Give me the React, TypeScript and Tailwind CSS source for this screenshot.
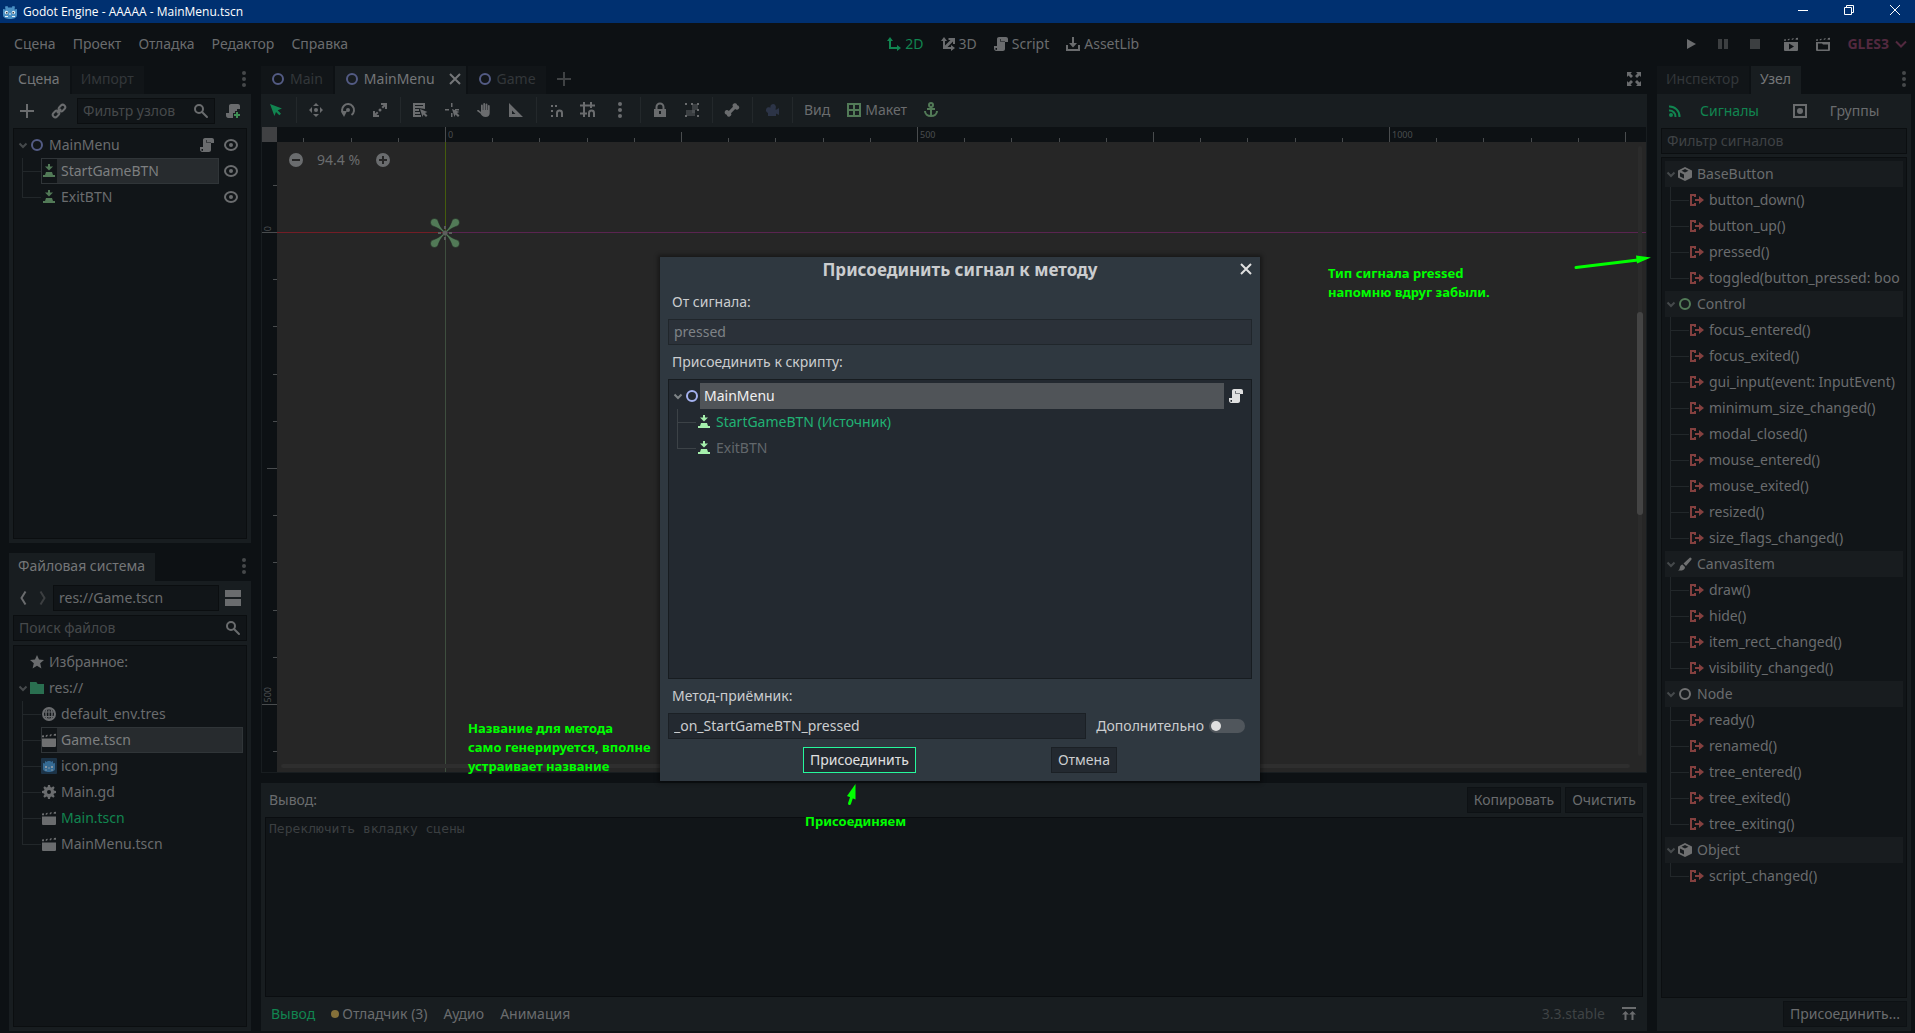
import { ReactNode, useState } from "react";
import clsx from "clsx";

interface IconProps {
  name: string;
  className?: string;
}

interface SignalGroup {
  title: string;
  icon: string;
  iconClass: string;
  signals: string[];
}

// 16x16 editor icons, drawn with currentColor
const ICONS: Record<string, ReactNode> = {
  ring: <circle cx="8" cy="8" r="5" fill="none" stroke="currentColor" strokeWidth="2" />,
  button: <path d="M7 1h2v2.500h3L8 7.500 4 3.500h3zM5 9h6l1 3h2v2H2v-2h2z" />,
  script: (
    <path d="M6 1C4.900 1 4 1.900 4 3v7H1v2.500C1 13.900 2 15 3.200 15H10c1.100 0 2-.9 2-2V6h3V3.200C15 1.900 14.100 1 13 1zm1 2h.6v2H12v.6H7zM2.500 12H4v1.200c0 .4-.3.800-.8.800s-.7-.4-.7-.8z" fillRule="evenodd" />
  ),
  scriptAdd: (
    <>
      <path d="M6 1C4.900 1 4 1.900 4 3v7H1v2.500C1 13.900 2 15 3.200 15H8v-5h2V8h2V6h3V3.200C15 1.900 14.100 1 13 1z" />
      <path className="text-[#3f8f55]" d="M11 9h2v2h2v2h-2v2h-2v-2H9v-2h2z" />
    </>
  ),
  eye: (
    <>
      <ellipse cx="8" cy="8" rx="6" ry="5" fill="none" stroke="currentColor" strokeWidth="2" />
      <circle cx="8" cy="8" r="2" />
    </>
  ),
  plus: <path d="M7 1h2v6h6v2H9v6H7V9H1V7h6z" />,
  link: (
    <g fill="none" stroke="currentColor" strokeWidth="2">
      <rect x="-3.500" y="-2.500" width="7" height="5" rx="2.500" transform="translate(11 5) rotate(-45)" />
      <rect x="-3.500" y="-2.500" width="7" height="5" rx="2.500" transform="translate(5 11) rotate(-45)" />
      <path d="M6 10l4-4" />
    </g>
  ),
  search: (
    <g fill="none" stroke="currentColor" strokeWidth="2">
      <circle cx="6" cy="6" r="4" />
      <path d="M9 9l5 5" strokeLinecap="round" />
    </g>
  ),
  arrowDown: <path d="M4.500 6.500L8 10l3.500-3.500" fill="none" stroke="currentColor" strokeWidth="2" />,
  chevron: <path d="M3 5.500l5 5 5-5" fill="none" stroke="currentColor" strokeWidth="2" />,
  back: <path d="M10.500 1.500L6.500 8l4 6.500" fill="none" stroke="currentColor" strokeWidth="2" />,
  forward: <path d="M5.500 1.500l4 6.500-4 6.500" fill="none" stroke="currentColor" strokeWidth="2" />,
  split: <path d="M0 0h16v7H0zM0 9h16v7H0z" />,
  star: <path d="M8 1l2 4.600 5 .4-3.800 3.300L12.400 14.500 8 11.800 3.600 14.500l1.200-5.200L1 6l5-.4z" />,
  folder: <path d="M1 2h6c1 0 1 2 2 2h6v10H1z" />,
  globe: (
    <g fill="none" stroke="currentColor">
      <circle cx="8" cy="8" r="6" strokeWidth="2" />
      <ellipse cx="8" cy="8" rx="3" ry="6" strokeWidth="1.500" />
      <path d="M2 6h12M2 10.500h12M8 2v12" strokeWidth="1.200" />
    </g>
  ),
  scene: <path d="M1 6.500h14V14a1 1 0 0 1-1 1H2a1 1 0 0 1-1-1zM1 3.500l2-.3v2H1zM5 3l2-.3-1 2H4.500zM9 2.500l2-.3-1 2H8.500zM13 2l2-.3v2h-2.500z" />,
  playScene: (
    <path fillRule="evenodd" d="M1 6h14v8a1 1 0 0 1-1 1H2a1 1 0 0 1-1-1zM6 7.500v6l5-3zM1 3.500l2-.3v1.500H1zM5 3l2-.3-1 1.500H4.500zM9 2.500l2-.3-1 1.500H8.500zM13 2l2-.3v2h-2.500z" />
  ),
  playCustom: (
    <path fillRule="evenodd" d="M1 6h14v8a1 1 0 0 1-1 1H2a1 1 0 0 1-1-1zM3 7.500v6h10v-5H8l-1-1zM1 3.500l2-.3v1.500H1zM5 3l2-.3-1 1.500H4.500zM9 2.500l2-.3-1 1.500H8.500zM13 2l2-.3v2h-2.500z" />
  ),
  gear: (
    <path fillRule="evenodd" d="M7 1h2l.4 2 1.200.5 1.700-1.200 1.400 1.400-1.200 1.700.5 1.200 2 .4v2l-2 .4-.5 1.200 1.200 1.700-1.400 1.400-1.700-1.200-1.200.5L9 15H7l-.4-2-1.200-.5-1.700 1.200-1.400-1.400 1.200-1.700L3 9.400 1 9V7l2-.4.5-1.200-1.200-1.700 1.400-1.400 1.700 1.200L6.600 3zM8 6a2 2 0 1 0 0 4 2 2 0 0 0 0-4z" />
  ),
  robot: (
    <>
      <rect width="16" height="16" rx="1" fill="#1c3347" />
      <path fill="#356a93" d="M2 5l2 .5V3l2 1 .5-1h3l.5 1 2-1v2.500L14 5v6c0 2-3 3-6 3s-6-1-6-3z" />
      <path fill="#8796a2" d="M4 8h2v2H4zM10 8h2v2h-2zM7.500 9h1v2h-1zM4 11.500h2v1H4zM10 11.500h2v1h-2z" />
    </>
  ),
  select: <path d="M2 2l12 4.500-4.300 1.800 3.300 3.400-1.700 1.600L8 10l-1.600 4z" />,
  move: (
    <>
      <path d="M8 1l3 3H5zM8 15l3-3H5zM1 8l3-3v6zM15 8l-3-3v6z" />
      <circle cx="8" cy="8" r="2" />
    </>
  ),
  rotate: (
    <>
      <path d="M4 12.500A6 6 0 1 1 11.500 13" fill="none" stroke="currentColor" strokeWidth="2" />
      <circle cx="8" cy="8" r="2" />
      <path d="M1 9h6l-3 6z" />
    </>
  ),
  scale: (
    <>
      <path d="M9 1h6v6h-2V4.500l-2 2L9.500 5l2-2H9zM1 9h2v2.500l2-2L6.500 11l-2 2H7v2H1z" />
      <circle cx="8" cy="8" r="1.500" />
    </>
  ),
  listSelect: (
    <>
      <path fillRule="evenodd" d="M1 1h12v6L6.500 6H3v1h4v2H3v1h5v2H3v1h6v2H1zM3 3v1h8V3z" />
      <path d="M8 7l7.500 3-2.500 1 2.500 2.500-1.500 1.500L11.500 12.500l-1 2.500z" />
    </>
  ),
  pivot: (
    <path d="M7 1h1.500v4H7zM1 7h4v1.500H1zM11 7h4v1.500h-4zM7 11h1.500v4H7zM8 7l7.500 3-2.500 1 2.500 2.500-1.500 1.500-2.500-2.500-1 2.500z" />
  ),
  hand: (
    <path d="M5 3.500a.9.900 0 0 1 1.800 0V8h.5V2a.9.900 0 0 1 1.800 0v6h.5V2.500a.9.900 0 0 1 1.800 0V8h.5V4a.9.900 0 0 1 1.800 0v7c0 2.500-1.500 4-4 4-2.800 0-4-1.500-5.200-3.500L1 9c0-1 1.500-1.300 2.200-.5L5 10z" />
  ),
  ruler: <path fillRule="evenodd" d="M1 1l14 14H1zM4 8.500V12h3.500z" />,
  snap: (
    <>
      <path d="M3 3h2v2H3zM7 3h2v2H7zM3 8h2v2H3zM3 13h2v2H3z" />
      <path d="M9 15v-4a2.500 2.500 0 0 1 5 0v4" fill="none" stroke="currentColor" strokeWidth="2" />
    </>
  ),
  snapGrid: (
    <g fill="none" stroke="currentColor" strokeWidth="2">
      <path d="M4 0v15M11 0v6M0 3.500h15M0 11.500h7" />
      <path d="M9 15v-4a2.500 2.500 0 0 1 5 0v4" />
    </g>
  ),
  dots: (
    <>
      <circle cx="8" cy="2" r="2" />
      <circle cx="8" cy="8" r="2" />
      <circle cx="8" cy="14" r="2" />
    </>
  ),
  lock: (
    <>
      <path d="M4.500 8V5a3.500 3.500 0 0 1 7 0v3" fill="none" stroke="currentColor" strokeWidth="2" />
      <path fillRule="evenodd" d="M2 7h12v8H2zM7 9v3h2V9z" />
    </>
  ),
  group: (
    <>
      <path fill="#3b3f42" d="M8 2h6v6h-3v6H2V8h6z" />
      <path fill="#4b4f52" d="M8 8h3v3H8z" />
      <path d="M1 1h2v2H1zM7 1h2v2H7zM13 1h2v2h-2zM1 13h2v2H1zM13 13h2v2h-2zM13 7h2v2h-2z" />
    </>
  ),
  bone: (
    <path d="M10.500 1.200a2.300 2.300 0 0 1 2.700 2 2.300 2.300 0 1 1-2 3.800L7 11.200a2.300 2.300 0 1 1-4.300 1.500A2.300 2.300 0 1 1 4.800 9L9 4.800a2.300 2.300 0 0 1 1.500-3.600z" />
  ),
  camera: (
    <path d="M9 2a3 3 0 0 1 2.700 4.200V8L15 6v7l-3-1.500V14H4v-3a3 3 0 1 1 2.500-5.400A3 3 0 0 1 9 2z" />
  ),
  layout: <path fillRule="evenodd" d="M1 1h14v14H1zM3 3v4h4V3zM9 3v4h4V3zM3 9v4h4V9zM9 9v4h4V9z" />,
  anchor: (
    <g fill="none" stroke="currentColor" strokeWidth="2">
      <circle cx="8" cy="3" r="2" />
      <path d="M8 5v9M4 7h8M2 9c0 3 2.500 5 6 5s6-2 6-5" />
    </g>
  ),
  twoD: <path d="M4 1l3 4H5v6h6V9l4 3-4 3v-2H3V5H1z" />,
  threeD: <path d="M4 1l3 4H5v4.500l5.500-5.500H8.500V2H15v6h-2V5.500L7.500 11H11V9l4 3-4 3v-2H3V5H1z" />,
  assetLib: <path d="M7 1h2v6h3l-4 4.500L4 7h3zM1 9h2v4h10V9h2v6H1z" />,
  play: <path d="M4 3l9 5-9 5z" />,
  pause: <path d="M3 3h4v10H3zM9 3h4v10H9z" />,
  stop: <path d="M3 3h10v10H3z" />,
  expand: (
    <path d="M1 1h5L4.500 2.500 7 5 5 7 2.500 4.500 1 6zM15 1v5l-1.500-1.500L11 7 9 5l2.500-2.500L10 1zM1 15v-5l1.500 1.500L5 9l2 2-2.500 2.500L6 15zM15 15h-5l1.500-1.500L9 11l2-2 2.500 2.500L15 10z" />
  ),
  close: <path d="M3 3l10 10M13 3L3 13" fill="none" stroke="currentColor" strokeWidth="2" />,
  signals: (
    <g fill="none" stroke="currentColor" strokeWidth="2">
      <circle cx="4" cy="12" r="1" />
      <path d="M2 7.500A6 6 0 0 1 8.500 14M2 3.500A10 10 0 0 1 12.500 14" />
    </g>
  ),
  groups: (
    <>
      <path fillRule="evenodd" d="M1 1h14v14H1zM3 3v10h10V3z" />
      <circle cx="8" cy="8" r="3" />
    </>
  ),
  cube: (
    <path fillRule="evenodd" d="M8 1l7 3.500v7L8 15l-7-3.500v-7zM8 3L4.500 4.800 8 6.500l3.500-1.700zM3 6.500v4l4 2V8.500z" />
  ),
  brush: (
    <path d="M13 1.500a1.500 1.500 0 0 1 1.500 2L9 10 6.500 7.500zM5.500 8.500L8 11c0 3-3 4-7 3.500 2-1 1.500-2 2-3.500.4-1.500 1.500-2.500 2.500-2.500z" />
  ),
  signal: <path d="M1 2h6v3H5V4H3v8h2v-1h2v3H1zM6 7h4V4l5 4-5 4V9H6z" />,
  expandBottom: <path d="M1 1h14v2H1zM4.500 5L8 8.500H5.500V14h-2V8.500H1zM11.500 5L15 8.500h-2.500V14h-2V8.500H8z" />,
  zoomOut: <path fillRule="evenodd" d="M8 1a7 7 0 1 0 0 14A7 7 0 0 0 8 1zM4 7h8v2H4z" />,
  zoomIn: <path fillRule="evenodd" d="M8 1a7 7 0 1 0 0 14A7 7 0 0 0 8 1zM7 4h2v3h3v2H9v3H7V9H4V7h3z" />,
};

function Icon({ name, className }: IconProps) {
  return (
    <svg viewBox="0 0 16 16" fill="currentColor" aria-hidden="true" className={clsx("h-4 w-4 shrink-0", className)}>
      {ICONS[name]}
    </svg>
  );
}

const MENUS = ["Сцена", "Проект", "Отладка", "Редактор", "Справка"];

const FILES = [
  { name: "default_env.tres", icon: "globe" },
  { name: "Game.tscn", icon: "scene", selected: true },
  { name: "icon.png", icon: "robot" },
  { name: "Main.gd", icon: "gear" },
  { name: "Main.tscn", icon: "scene", main: true },
  { name: "MainMenu.tscn", icon: "scene" },
];

const SIGNAL_GROUPS: SignalGroup[] = [
  {
    title: "BaseButton",
    icon: "cube",
    iconClass: "text-[#6f7071]",
    signals: ["button_down()", "button_up()", "pressed()", "toggled(button_pressed: boo"],
  },
  {
    title: "Control",
    icon: "ring",
    iconClass: "text-[#527a57]",
    signals: [
      "focus_entered()",
      "focus_exited()",
      "gui_input(event: InputEvent)",
      "minimum_size_changed()",
      "modal_closed()",
      "mouse_entered()",
      "mouse_exited()",
      "resized()",
      "size_flags_changed()",
    ],
  },
  {
    title: "CanvasItem",
    icon: "brush",
    iconClass: "text-[#6f7071]",
    signals: ["draw()", "hide()", "item_rect_changed()", "visibility_changed()"],
  },
  {
    title: "Node",
    icon: "ring",
    iconClass: "text-[#6f7071]",
    signals: ["ready()", "renamed()", "tree_entered()", "tree_exited()", "tree_exiting()"],
  },
  { title: "Object", icon: "cube", iconClass: "text-[#6f7071]", signals: ["script_changed()"] },
];

const TOOL_GROUPS = [
  ["select"],
  ["move", "rotate", "scale"],
  ["listSelect", "pivot", "hand", "ruler"],
  ["snap", "snapGrid", "dots"],
  ["lock", "group"],
  ["bone"],
  ["camera"],
];

// canvas origin and zoom, in viewport pixels
const ORIGIN_X = 183;
const ORIGIN_Y = 105;
const ZOOM = 0.944;

function Guide({ last, light }: { last?: boolean; light?: boolean }) {
  const color = light ? "border-[#3c4247]" : "border-[#22272a]";
  return (
    <span className="ml-[5px] flex h-[26px] w-[19px] shrink-0 flex-col">
      <span className={clsx("h-[14px] border-b border-l", color)} />
      {!last && <span className={clsx("flex-1 border-l", color)} />}
    </span>
  );
}

function Arrow() {
  return (
    <span className="flex w-3 shrink-0 justify-center">
      <Icon name="arrowDown" className="text-[#45494b]" />
    </span>
  );
}

function DockTab({ label, active }: { label: string; active?: boolean }) {
  return (
    <button
      type="button"
      className={clsx("h-7 pr-[10px] pb-[2px] pl-[9px]", active ? "bg-[#181d20] text-[#747678]" : "bg-[#111518] text-[#33373a]")}
    >
      {label}
    </button>
  );
}

function DockMenu() {
  return (
    <button type="button" aria-label="Параметры дока" className="ml-auto flex w-[14px] items-center justify-center pb-[2px] text-[#45484a]">
      <Icon name="dots" />
    </button>
  );
}

function ToolButton({ name, label, className }: { name: string; label: string; className?: string }) {
  return (
    <button type="button" aria-label={label} className={clsx("flex h-[26px] w-7 shrink-0 items-center justify-center", className)}>
      <Icon name={name} />
    </button>
  );
}

function SelectedLabel({ icon, iconClass, label }: { icon: string; iconClass: string; label: string }) {
  return (
    <span className="flex h-[26px] flex-1 items-center outline-1 -outline-offset-1 outline-[#303538]">
      <Icon name={icon} className={iconClass} />
      <span className="flex h-full flex-1 items-center bg-[#272b2e] pl-1 text-[#7d7f80]">{label}</span>
    </span>
  );
}

function TitleBar() {
  return (
    <header className="flex h-[23px] shrink-0 items-center bg-[#003070] pl-[2px] text-xs text-white">
      <svg viewBox="0 0 16 16" className="mr-[5px] h-4 w-4" aria-hidden="true">
        <path fill="#4a90c4" d="M1 5l2.500.5-.5-3 2.500-.5.5 1.500h4L10.500 2l2.500.5-.5 3L15 5v6c0 3-4 4-7 4s-7-1-7-4z" />
        <circle cx="4.500" cy="8.500" r="1.700" fill="#e8f1f8" />
        <circle cx="11.500" cy="8.500" r="1.700" fill="#e8f1f8" />
        <path d="M4 8h1.500v1.500H4zM10.500 8H12v1.500h-1.500z" fill="#38424a" />
        <path d="M7.500 9h1v2h-1zM3 12h3v1H3zM10 12h3v1h-3z" fill="#e8f1f8" />
      </svg>
      <h1 className="flex-1 font-['Open_Sans']">Godot Engine - AAAAA - MainMenu.tscn</h1>
      <div className="flex items-center gap-9 pr-[15px] pb-[3px]">
        <button type="button" aria-label="Свернуть">
          <svg viewBox="0 0 10 10" className="h-[10px] w-[10px]"><path d="M0 5.500h10" stroke="#fff" /></svg>
        </button>
        <button type="button" aria-label="Восстановить">
          <svg viewBox="0 0 10 10" className="h-[10px] w-[10px]"><path d="M.5 2.500h7v7h-7zM2.500 2V.5h7v7H8" fill="none" stroke="#fff" /></svg>
        </button>
        <button type="button" aria-label="Закрыть">
          <svg viewBox="0 0 10 10" className="h-[10px] w-[10px]"><path d="M0 0l10 10M10 0L0 10" stroke="#fff" /></svg>
        </button>
      </div>
    </header>
  );
}

function MenuBar() {
  return (
    <nav className="flex h-[43px] shrink-0 items-center justify-between pr-[6px] pb-px pl-[14px] text-[#6a6c6e]">
      <div className="flex gap-[17px]">
        {MENUS.map((menu) => (
          <button key={menu} type="button">{menu}</button>
        ))}
      </div>
      <div className="flex gap-4">
        <button type="button" className="flex items-center gap-[3px] text-[#118550]"><Icon name="twoD" />2D</button>
        <button type="button" className="flex items-center gap-[3px]"><Icon name="threeD" />3D</button>
        <button type="button" className="flex items-center gap-[3px]"><Icon name="script" />Script</button>
        <button type="button" className="flex items-center gap-[3px]"><Icon name="assetLib" />AssetLib</button>
      </div>
      <div className="flex items-center gap-1">
        <ToolButton name="play" label="Запустить" />
        <ToolButton name="pause" label="Пауза" className="text-[#3c3f41]" />
        <ToolButton name="stop" label="Стоп" className="mr-1 text-[#3c3f41]" />
        <ToolButton name="playScene" label="Запустить сцену" />
        <ToolButton name="playCustom" label="Запустить другую сцену" />
        <button type="button" className="ml-[6px] flex items-center gap-1 font-bold text-[#52293f]">
          GLES3
          <Icon name="chevron" />
        </button>
      </div>
    </nav>
  );
}

function SceneDock() {
  return (
    <section className="flex min-h-0 flex-1 flex-col">
      <div className="flex gap-[2px]">
        <DockTab label="Сцена" active />
        <DockTab label="Импорт" />
        <DockMenu />
      </div>
      <div className="flex flex-1 flex-col gap-1 bg-[#181d20] p-1">
        <div className="flex items-center gap-1">
          <ToolButton name="plus" label="Добавить узел" />
          <ToolButton name="link" label="Добавить экземпляр" />
          <label className="flex h-[26px] min-w-0 flex-1 items-center border border-[#0b0e10] bg-[#111518] px-[5px]">
            <input type="text" aria-label="Фильтр узлов" placeholder="Фильтр узлов" className="min-w-0 flex-1 bg-transparent outline-none placeholder:text-[#46494b]" />
            <Icon name="search" />
          </label>
          <ToolButton name="scriptAdd" label="Прикрепить скрипт" />
        </div>
        <div role="tree" className="flex-1 border border-[#0b0e10] bg-[#111518] p-[3px]">
          <div role="treeitem" className="flex h-[26px] items-center pr-1">
            <Arrow />
            <Icon name="ring" className="text-[#535b84]" />
            <span className="flex-1 pl-1">MainMenu</span>
            <Icon name="script" className="mr-2" />
            <Icon name="eye" />
          </div>
          <div role="treeitem" aria-selected="true" className="flex h-[26px] items-center gap-1 pr-1">
            <span className="flex flex-1">
              <Guide />
              <SelectedLabel icon="button" iconClass="text-[#527a57]" label="StartGameBTN" />
            </span>
            <Icon name="eye" />
          </div>
          <div role="treeitem" className="flex h-[26px] items-center pr-1">
            <Guide last />
            <Icon name="button" className="text-[#527a57]" />
            <span className="flex-1 pl-1">ExitBTN</span>
            <Icon name="eye" />
          </div>
        </div>
      </div>
    </section>
  );
}

function FileSystemDock() {
  return (
    <section className="flex h-[478px] flex-col">
      <div className="flex">
        <DockTab label="Файловая система" active />
        <DockMenu />
      </div>
      <div className="flex flex-1 flex-col gap-1 bg-[#181d20] p-1">
        <div className="flex items-center">
          <button type="button" aria-label="Назад" className="pl-[2px]"><Icon name="back" /></button>
          <button type="button" aria-label="Вперёд" className="mr-[2px] pl-1 text-[#3c3f41]"><Icon name="forward" /></button>
          <input type="text" aria-label="Путь" defaultValue="res://Game.tscn" className="h-[26px] min-w-0 flex-1 border border-[#0b0e10] bg-[#111518] px-[5px] pb-px outline-none" />
          <button type="button" aria-label="Разделить панель" className="px-[6px]"><Icon name="split" /></button>
        </div>
        <label className="flex h-[26px] items-center border border-[#0b0e10] bg-[#111518] px-[5px]">
          <input type="text" aria-label="Поиск файлов" placeholder="Поиск файлов" className="min-w-0 flex-1 bg-transparent outline-none placeholder:text-[#46494b]" />
          <Icon name="search" />
        </label>
        <div role="tree" className="flex-1 border border-[#0b0e10] bg-[#111518] p-[3px]">
          <div role="treeitem" className="flex h-[26px] items-center gap-1 pl-3">
            <Icon name="star" />
            Избранное:
          </div>
          <div role="treeitem" className="flex h-[26px] items-center">
            <Arrow />
            <Icon name="folder" className="text-[#2a6f50]" />
            <span className="pl-1">res://</span>
          </div>
          {FILES.map((file, index) => (
            <div key={file.name} role="treeitem" aria-selected={!!file.selected} className="flex h-[26px] items-center">
              <Guide last={index === FILES.length - 1} />
              {file.selected ? (
                <SelectedLabel icon={file.icon} iconClass="text-[#6f7071]" label={file.name} />
              ) : (
                <>
                  <Icon name={file.icon} />
                  <span className={clsx("pl-1", file.main && "text-[#118550]")}>{file.name}</span>
                </>
              )}
            </div>
          ))}
        </div>
      </div>
    </section>
  );
}

function SceneTabs() {
  return (
    <div className="flex gap-[2px]">
      <button type="button" className="flex h-7 items-center gap-1 bg-[#111518] pr-[10px] pb-[2px] pl-[9px] text-[#33373a]">
        <Icon name="ring" className="text-[#535b84]" />Main
      </button>
      <button type="button" className="flex h-7 items-center gap-1 bg-[#181d20] pr-[3px] pb-[2px] pl-[9px] text-[#747678]">
        <Icon name="ring" className="text-[#535b84]" />MainMenu
        <Icon name="close" className="ml-2" />
      </button>
      <button type="button" className="flex h-7 items-center gap-1 bg-[#111518] pr-[10px] pb-[2px] pl-[9px] text-[#33373a]">
        <Icon name="ring" className="text-[#535b84]" />Game
      </button>
      <button type="button" aria-label="Новая сцена" className="ml-2 pb-[2px] text-[#3f4244]"><Icon name="plus" /></button>
      <button type="button" aria-label="Без отвлечения" className="mr-[5px] ml-auto pb-[2px]"><Icon name="expand" /></button>
    </div>
  );
}

function Toolbar() {
  return (
    <div className="flex h-[33px] items-start gap-1 bg-[#181d20] pt-[3px] pl-px">
      {TOOL_GROUPS.map((group) => (
        <div key={group[0]} className="flex items-center gap-1">
          {group.map((tool) => (
            <ToolButton
              key={tool}
              name={tool}
              label={tool}
              className={clsx(tool === "select" && "text-[#118550]", tool === "camera" && "text-[#2c3447]")}
            />
          ))}
          <span className="flex w-1 justify-center"><span className="h-[26px] w-px bg-[#23282b]" /></span>
        </div>
      ))}
      <button type="button" className="h-[26px] px-[6px]">Вид</button>
      <button type="button" className="flex h-[26px] items-center gap-[3px] px-[6px]">
        <Icon name="layout" className="text-[#527a57]" />Макет
      </button>
      <ToolButton name="anchor" label="Якорь" className="text-[#527a57]" />
    </div>
  );
}

function tickSize(step: number) {
  if (step % 10 === 0) return 15;
  return step % 5 === 0 ? 10 : 4;
}

function Viewport() {
  const xSteps = Array.from({ length: 29 }, (_, i) => i - 3);
  const ySteps = Array.from({ length: 13 }, (_, i) => i - 1);
  return (
    <div className="relative mx-px mb-px min-h-0 flex-1 overflow-hidden bg-[#262626]">
      <svg className="absolute inset-0 h-full w-full" shapeRendering="crispEdges" aria-hidden="true">
        <rect width="100%" height="15" fill="#0d1114" />
        <rect width="15" height="100%" fill="#0d1114" />
        <rect width="15" height="15" fill="#404143" />
        {xSteps.map((step) => {
          const x = Math.round(ORIGIN_X + step * 50 * ZOOM);
          return <rect key={step} x={x} y={15 - tickSize(step)} width="1" height={tickSize(step)} fill="#494c4e" />;
        })}
        {ySteps.map((step) => {
          const y = Math.round(ORIGIN_Y + step * 50 * ZOOM);
          return <rect key={step} x={15 - tickSize(step)} y={y} width={tickSize(step)} height="1" fill="#494c4e" />;
        })}
        <rect x={ORIGIN_X} y="15" width="1" height="90" fill="#455c0d" />
        <rect x={ORIGIN_X} y={ORIGIN_Y} width="1" height="100%" fill="#3e4e3e" />
        <rect x="15" y={ORIGIN_Y} width="168" height="1" fill="#731d26" />
        <rect x={ORIGIN_X} y={ORIGIN_Y} width="100%" height="1" fill="#5a2450" />
      </svg>
      {/* anchor handles of the root control */}
      <svg viewBox="-16 -16 32 32" className="absolute top-[90px] left-[167px] h-8 w-8" aria-hidden="true">
        {[45, 135, 225, 315].map((angle) => (
          <path
            key={angle}
            transform={`rotate(${angle})`}
            d="M2-.8C6-.8 9-1.500 12.500-3.200a4 4 0 1 1 0 6.400C9 1.500 6 .8 2 .8z"
            fill="#527a57"
            stroke="#1f2420"
            strokeWidth="0.500"
          />
        ))}
        <path d="M-7 0h3M4 0h3M0-7v3M0 4v3" stroke="#5b5b5b" strokeWidth="2" />
        <circle r="2.500" fill="#5d5f5d" />
      </svg>
      <span className="absolute top-[2px] left-[186px] text-[9px] leading-[11px] text-[#4a4d4f]">0</span>
      <span className="absolute top-[2px] left-[658px] text-[9px] leading-[11px] text-[#4a4d4f]">500</span>
      <span className="absolute top-[2px] left-[1130px] text-[9px] leading-[11px] text-[#4a4d4f]">1000</span>
      <span className="absolute top-[99px] left-0 rotate-180 text-[9px] leading-[11px] text-[#4a4d4f] [writing-mode:vertical-rl]">0</span>
      <span className="absolute top-[560px] left-0 rotate-180 text-[9px] leading-[11px] text-[#4a4d4f] [writing-mode:vertical-rl]">500</span>
      <div className="absolute top-[23px] left-[26px] flex items-center text-[#6a6c6e]">
        <button type="button" aria-label="Уменьшить"><Icon name="zoomOut" /></button>
        <button type="button" className="w-[71px] pr-[2px]">94.4 %</button>
        <button type="button" aria-label="Увеличить"><Icon name="zoomIn" /></button>
      </div>
      <div className="absolute top-[19px] right-[3px] bottom-4 flex w-[6px] justify-center">
        <span className="w-1 rounded-full bg-[#2b2b2b]" />
        <span className="absolute top-[166px] left-0 h-[203px] w-[6px] rounded-full bg-[#444444]" />
      </div>
      <div className="absolute right-4 bottom-1 left-[19px] h-1 rounded-full bg-[#2e2e2e]" />
    </div>
  );
}

function OutputPanel() {
  return (
    <section className="mt-[10px] flex h-[248px] shrink-0 flex-col gap-1 bg-[#181d20] p-1">
      <div className="flex items-center gap-1">
        <h2 className="flex-1 pl-1">Вывод:</h2>
        <button type="button" className="h-[26px] border border-[#0d1114] bg-[#111518] px-[6px]">Копировать</button>
        <button type="button" className="h-[26px] border border-[#0d1114] bg-[#111518] px-[6px]">Очистить</button>
      </div>
      <div className="flex-1 border border-[#0a0d10] bg-[#111518] px-[3px] font-['DejaVu_Sans_Mono'] text-[13px] leading-[22px] text-[#3b3f41]">
        Переключить вкладку сцены
      </div>
      <div className="flex h-[26px] items-center gap-4 pl-[6px]">
        <button type="button" className="text-[#118550]">Вывод</button>
        <button type="button" className="flex items-center gap-[3px]">
          <span className="h-2 w-2 rounded-full bg-[#85713a]" />Отладчик (3)
        </button>
        <button type="button">Аудио</button>
        <button type="button">Анимация</button>
        <span className="ml-auto text-[#3f4345]">3.3.stable</span>
        <button type="button" aria-label="Развернуть нижнюю панель" className="pr-[6px]"><Icon name="expandBottom" /></button>
      </div>
    </section>
  );
}

function NodeDock() {
  return (
    <aside className="flex w-[254px] shrink-0 flex-col">
      <div className="flex gap-[2px]">
        <DockTab label="Инспектор" />
        <DockTab label="Узел" active />
        <DockMenu />
      </div>
      <div className="flex min-h-0 flex-1 flex-col bg-[#181d20] p-1">
        <div className="mb-1 flex gap-1">
          <button type="button" className="flex h-[26px] flex-1 items-center px-[6px] text-[#118550]">
            <Icon name="signals" /><span className="flex-1">Сигналы</span>
          </button>
          <button type="button" className="flex h-[26px] flex-1 items-center px-[6px]">
            <Icon name="groups" /><span className="flex-1">Группы</span>
          </button>
        </div>
        <input type="text" aria-label="Фильтр сигналов" placeholder="Фильтр сигналов" className="mb-[3px] h-[26px] border border-[#0b0e10] bg-[#13171a] px-[5px] pb-px outline-none placeholder:text-[#3f4245]" />
        <div role="tree" className="min-h-0 flex-1 overflow-hidden border border-[#0b0e10] bg-[#111518] p-[3px]">
          {SIGNAL_GROUPS.map((group) => (
            <div key={group.title}>
              <div role="treeitem" className="flex h-[26px] items-center bg-[#181c1f]">
                <Arrow />
                <Icon name={group.icon} className={group.iconClass} />
                <span className="pl-1">{group.title}</span>
              </div>
              {group.signals.map((signal, index) => (
                <div key={signal} role="treeitem" className="flex h-[26px] items-center">
                  <Guide last={index === group.signals.length - 1} />
                  <Icon name="signal" className="text-[#84403f]" />
                  <span className="pl-1 whitespace-nowrap">{signal}</span>
                </div>
              ))}
            </div>
          ))}
        </div>
        <button type="button" className="mt-[3px] h-[26px] self-end border border-[#0d1114] bg-[#111518] px-[6px]">Присоединить...</button>
      </div>
    </aside>
  );
}

function ConnectDialog() {
  const [method, setMethod] = useState("_on_StartGameBTN_pressed");
  return (
    <div role="dialog" aria-labelledby="connect-title" className="flex w-[600px] flex-col bg-[#2f3840] px-2 pb-2 text-[#cbcdcf] shadow-[0_0_4px_2px_rgba(0,0,0,0.4)]">
      <div className="-mx-[2px] flex h-[26px] items-center">
        <h2 id="connect-title" className="flex-1 pl-4 text-center text-[17px] font-bold">Присоединить сигнал к методу</h2>
        <button type="button" aria-label="Закрыть" className="pb-[2px] text-[#e0e0e0]"><Icon name="close" /></button>
      </div>
      <label htmlFor="from-signal" className="flex h-9 items-center pt-[2px] pl-1">От сигнала:</label>
      <input id="from-signal" type="text" readOnly value="pressed" className="h-[26px] border border-[#20262b] bg-[#2b3139] px-[5px] pb-px text-[#7f8387] outline-none" />
      <p className="flex h-[34px] items-center pl-1">Присоединить к скрипту:</p>
      <div role="tree" className="h-[300px] border border-[#171c20] bg-[#232930] p-[3px]">
        <div role="treeitem" aria-selected="true" className="flex h-[26px] items-center pr-1">
          <span className="flex w-3 shrink-0 justify-center"><Icon name="arrowDown" className="text-[#7e8386]" /></span>
          <Icon name="ring" className="text-[#a5b2f0]" />
          <span className="mr-1 flex h-full flex-1 items-center bg-[#505458] pl-1 text-[#f0f0f0]">MainMenu</span>
          <Icon name="script" className="text-[#e0e0e0]" />
        </div>
        <div role="treeitem" className="flex h-[26px] items-center">
          <Guide light />
          <Icon name="button" className="text-[#a5efac]" />
          <span className="pl-1 text-[#21b274]">StartGameBTN (Источник)</span>
        </div>
        <div role="treeitem" className="flex h-[26px] items-center">
          <Guide last light />
          <Icon name="button" className="text-[#a5efac]" />
          <span className="pl-1 text-[#62676b]">ExitBTN</span>
        </div>
      </div>
      <label htmlFor="method" className="flex h-[34px] items-center pl-1">Метод-приёмник:</label>
      <div className="flex items-center">
        <input id="method" type="text" value={method} onChange={(event) => setMethod(event.target.value)} className="h-[26px] min-w-0 flex-1 border border-[#1b2025] bg-[#232930] px-[5px] pb-px outline-none" />
        <label className="flex items-center gap-[5px] pr-[7px] pl-[10px]">
          Дополнительно
          <input type="checkbox" className="peer sr-only" />
          <span className="flex h-[14px] w-9 items-center rounded-full bg-[#50565c] px-[2px] peer-checked:justify-end">
            <span className="h-[10px] w-[10px] rounded-full bg-[#e0e0e0]" />
          </span>
        </label>
      </div>
      <div className="mt-2 flex justify-evenly">
        <button type="button" className="h-[26px] border border-[#26f79c] bg-[#232930] px-[6px] text-[#e0e0e0]">Присоединить</button>
        <button type="button" className="h-[26px] border border-[#1b2025] bg-[#232930] px-[6px]">Отмена</button>
      </div>
    </div>
  );
}

function Notes() {
  return (
    <div className="pointer-events-none absolute inset-0 text-[13px] leading-[19px] font-bold whitespace-nowrap text-[#00ff00]">
      <p className="absolute top-[719px] left-[468px]">Название для метода<br />само генерируется, вполне<br />устраивает название</p>
      <p className="absolute top-[264px] left-[1328px]">Тип сигнала pressed<br />напомню вдруг забыли.</p>
      <p className="absolute top-[812px] left-[805px]">Присоединяем</p>
      <svg className="absolute inset-0 h-full w-full" fill="#00ff00" stroke="#00ff00" aria-hidden="true">
        <path d="M1576 267.500L1638 260" strokeWidth="3" strokeLinecap="round" />
        <path d="M1636 255.500L1651 257.500 1637 263.500z" stroke="none" />
        <path d="M849.500 803.500L852 796" strokeWidth="3" strokeLinecap="round" />
        <path d="M855.500 784V799.500L847 796z" stroke="none" />
      </svg>
    </div>
  );
}

export default function App() {
  return (
    <div className="relative flex h-screen flex-col overflow-hidden bg-[#0d1114] font-['Noto_Sans',sans-serif] text-sm leading-5 text-[#6a6c6e]">
      <TitleBar />
      <MenuBar />
      <main className="flex min-h-0 flex-1 gap-[10px] pr-1 pb-[2px] pl-[9px]">
        <aside className="flex w-[242px] shrink-0 flex-col gap-[10px]">
          <SceneDock />
          <FileSystemDock />
        </aside>
        <div className="flex min-w-0 flex-1 flex-col">
          <SceneTabs />
          <div className="flex min-h-0 flex-1 flex-col bg-[#181d20]">
            <Toolbar />
            <Viewport />
          </div>
          <OutputPanel />
        </div>
        <NodeDock />
      </main>
      <div className="absolute inset-0 flex items-start justify-center pt-[257px] pl-[5px]">
        <ConnectDialog />
      </div>
      <Notes />
    </div>
  );
}
